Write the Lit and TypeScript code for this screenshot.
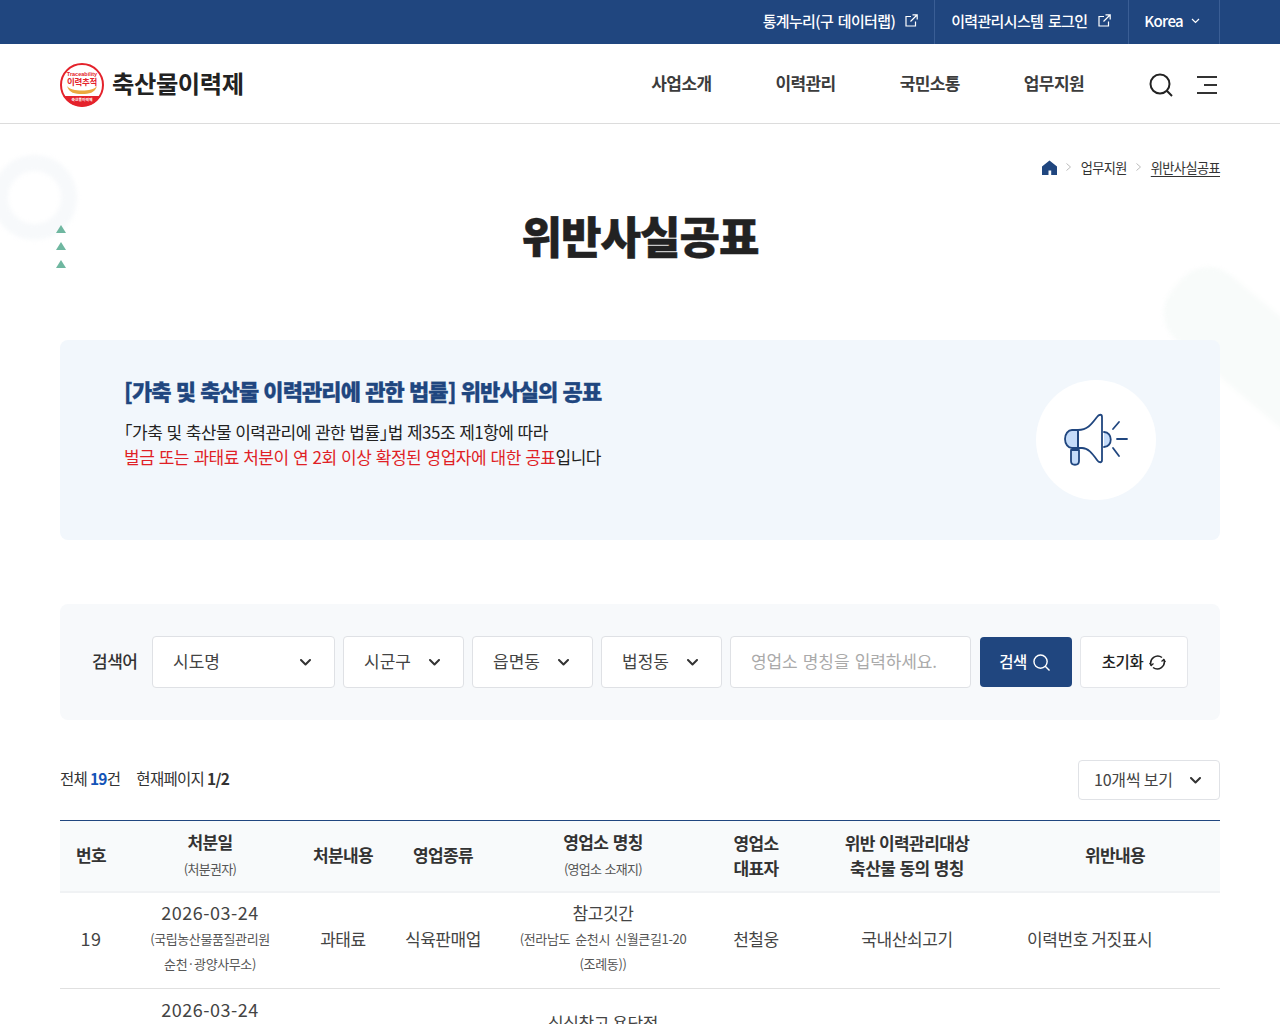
import { LitElement, html, css, svg } from "lit";
import { customElement } from "lit/decorators.js";

const chevron = svg`<path d="M1 1l4.500 4.500L10 1" fill="none" stroke="currentColor" stroke-width="2" stroke-linecap="round" stroke-linejoin="round"/>`;
const ext = html`<svg class="ext" width="13" height="13" viewBox="0 0 13 13" fill="none" stroke="#fff" stroke-width="1.200"><path d="M6 2.500H1v9.500h9.500V7.500"/><path d="M7.500 .8h4.700v4.700M12 1L5.500 7.500"/></svg>`;

@customElement("app-root")
export class AppRoot extends LitElement {
  static styles = css`
    :host { display: block; position: relative; overflow: hidden; height: 1024px; background: #fff; color: #333;
      font-family: "Noto Sans CJK KR", "Noto Sans", sans-serif; letter-spacing: -0.5px; }
    .wrap { width: 1160px; margin: 0 auto; position: relative; }
    .top { height: 44px; background: #20467f; color: #fff; }
    .top .wrap { display: flex; justify-content: flex-end; height: 44px; }
    .top a { box-sizing: border-box; display: flex; align-items: center; gap: 10px; padding: 0 16px 3px; border-left: 1px solid #3a5e95; font-size: 15px; font-weight: 500; letter-spacing: -0.65px; word-spacing: 2px; }
    .top a:first-child { border-left: 0; }
    .top a:nth-child(2) { padding-right: 17px; gap: 11px; }
    .top a:last-child { border-right: 1px solid #3a5e95; padding-left: 15px; padding-right: 19px; gap: 8px; }
    .head { height: 79px; border-bottom: 1px solid #dcdcdc; }
    .head .wrap { display: flex; align-items: center; height: 79px; }
    .brand { display: flex; align-items: center; gap: 8px; font-size: 24.3px; font-weight: 700; color: #222; letter-spacing: -0.4px; }
    .brand svg { margin-top: 2px; }
    .brand span { padding-bottom: 2px; }
    .nav { margin-left: auto; display: flex; gap: 64px; padding-bottom: 3px; font-size: 17px; font-weight: 700; color: #3c3c3c; letter-spacing: -0.6px; margin-right: 65px; }
    .tools { display: flex; align-items: center; gap: 24px; margin-right: 3px; padding-top: 2px; }
    .decor { position: absolute; pointer-events: none; }
    .ring { left: -8px; top: 155px; width: 85px; height: 85px; box-sizing: border-box; border: 16px solid #f7f9fb; border-radius: 50%; filter: blur(2px); }
    .bar { left: 1146px; top: 326px; width: 260px; height: 85px; background: #f8fbfa; border-radius: 36px; transform: rotate(40deg); filter: blur(2px); }
    .tri { left: 56px; width: 0; height: 0; border-left: 5px solid transparent; border-right: 5px solid transparent; border-bottom: 8px solid #6fb7a0; }
    .crumb { display: flex; justify-content: flex-end; align-items: center; gap: 9.5px; height: 20px; padding-top: 33px; font-size: 13.2px; color: #333; letter-spacing: -0.6px; }
    .crumb .cur { text-decoration: underline; text-underline-offset: 3px; }
    .crumb svg { display: block; }
    h1 { margin: 0 0 81px; height: 60px; padding-top: 22px; text-align: center; line-height: 72px; font-size: 44px; font-weight: 900; color: #222; letter-spacing: -1px; -webkit-text-stroke: 0.5px #222; }
    .notice { position: relative; height: 200px; box-sizing: border-box; padding: 34px 64px; background: #f2f7fc; border-radius: 8px; display: flex; justify-content: space-between; }
    .notice h2 { margin: 0 0 13px 0; font-size: 22px; line-height: 32px; font-weight: 900; color: #20467f; letter-spacing: -0.9px; word-spacing: 1px; -webkit-text-stroke: 0.3px #20467f; }
    .notice p { margin: 0; font-size: 17px; line-height: 25px; color: #222; letter-spacing: -0.5px; word-spacing: 0.8px; }
    .notice em { font-style: normal; color: #e01f26; word-spacing: 1.1px; }
    .circle { width: 120px; height: 120px; margin: 6px 0 0 0; border-radius: 50%; background: #fff; display: flex; align-items: center; justify-content: center; }
    .circle svg { margin-right: 2px; }
    .search { position: relative; margin-top: 64px; height: 116px; box-sizing: border-box; padding: 32px; background: #f7f9fb; border-radius: 8px; display: flex; gap: 8px; align-items: center; }
    .search label { width: 52px; padding-bottom: 3px; font-size: 17px; font-weight: 500; color: #333; letter-spacing: -0.5px; }
    .sel { box-sizing: border-box; height: 52px; display: flex; align-items: center; justify-content: space-between; padding: 0 23px 3px 20px; background: #fff; border: 1px solid #dfe1e5; border-radius: 4px; font-size: 17px; color: #444; letter-spacing: 0; }
    .sel svg { color: #333; margin-top: 3px; }
    .s1 { width: 183px; } .s2 { width: 121px; }
    .input { width: 241px; color: #aaa; justify-content: flex-start; padding-left: 20px; letter-spacing: -0.1px; word-spacing: 1.5px; }
    .btn { box-sizing: border-box; height: 50px; display: flex; align-items: center; justify-content: center; gap: 6px; padding-bottom: 2px; border-radius: 4px; font-size: 15.5px; font-weight: 500; letter-spacing: -0.4px; }
    .btn svg { margin-top: 2px; }
    .go { width: 92px; margin-left: 1px; padding-right: 3px; background: #20467f; color: #fff; }
    .reset { width: 108px; height: 52px; background: #fff; border: 1px solid #e4e6ea; color: #222; }
    .info { position: relative; margin-top: 40px; display: flex; justify-content: space-between; align-items: center; font-size: 15.5px; color: #333; letter-spacing: -0.7px; }
    .info .txt { padding-bottom: 5px; }
    .info b { font-weight: 700; } .info .n { color: #1454b8; } .info .sp { margin-left: 16px; }
    .per { box-sizing: border-box; width: 142px; height: 40px; padding: 0 18px 2px 15px; font-size: 16px; letter-spacing: -0.2px; border-color: #e0e2e6; }
    table { position: relative; margin-top: 20px; width: 1160px; border-collapse: collapse; table-layout: fixed; border-top: 1px solid #20467f; }
    th { box-sizing: border-box; height: 71px; padding: 0 0 2px; background: #f8fafb; border-bottom: 2px solid #f0f2f4; font-size: 17px; line-height: 25px; font-weight: 700; color: #333; letter-spacing: -0.6px; word-spacing: 1px; }
    th small { display: block; font-size: 13px; font-weight: 400; color: #555; letter-spacing: -0.7px; margin-top: 2px; }
    td { box-sizing: border-box; height: 97px; padding: 0 0 4px; text-align: center; border-bottom: 1px solid #e0e0e0; font-size: 17px; line-height: 25px; color: #444; letter-spacing: -0.4px; }
    td small { display: block; margin-top: 1px; font-size: 13px; color: #555; letter-spacing: -0.4px; word-spacing: 1.5px; }
    td small.addr { letter-spacing: -0.35px; word-spacing: 2.5px; }
    td.l { text-align: left; padding-left: 17px; }
    .date, .num { font-size: 18px; letter-spacing: 0.5px; }
  `;

  private row(n: string, date: string, org: unknown, kind: string, type: string, name: string, addr: unknown, rep: string, item: string, text: string) {
    return html`<tr>
      <td class="num">${n}</td><td><span class="date">${date}</span><small>${org}</small></td><td>${kind}</td><td>${type}</td>
      <td>${name}<small class="addr">${addr}</small></td><td>${rep}</td><td>${item}</td><td class="l">${text}</td>
    </tr>`;
  }

  render() {
    const chev = html`<svg width="11" height="7" viewBox="0 0 11 7">${chevron}</svg>`;
    return html`
      <div class="decor ring"></div>
      <div class="decor bar"></div>
      <div class="decor tri" style="top:225px"></div>
      <div class="decor tri" style="top:242px"></div>
      <div class="decor tri" style="top:260px"></div>

      <div class="top"><div class="wrap">
        <a>통계누리(구 데이터랩) ${ext}</a>
        <a>이력관리시스템 로그인 ${ext}</a>
        <a>Korea <svg width="9" height="6" viewBox="0 0 9 6" fill="none" stroke="#fff" stroke-width="1.200"><path d="M1 1l3.500 3.500L8 1"/></svg></a>
      </div></div>

      <div class="head"><div class="wrap">
        <div class="brand">
          <svg width="44" height="44" viewBox="0 0 44 44">
            <circle cx="22" cy="22" r="21" fill="#fff" stroke="#e4222b" stroke-width="2"/>
            <path d="M3.800 33h36.400A21 21 0 0 1 3.800 33z" fill="#e4222b"/>
            <text x="22" y="12.500" text-anchor="middle" font-size="5.500" font-weight="700" fill="#e4222b" letter-spacing="0" font-family="Liberation Sans, sans-serif">Traceability</text>
            <text x="22" y="21.500" text-anchor="middle" font-size="8.500" font-weight="700" fill="#e4222b" letter-spacing="-.3">이력추적</text>
            <path d="M7 23c2 7 8 8 15 8s13-1 15-8c-3 3.500-8 4.500-15 4.500S10 26.500 7 23z" fill="#eba93f"/>
            <text x="22" y="38.200" text-anchor="middle" font-size="3.800" fill="#fff" letter-spacing="0">축산물이력제</text>
          </svg>
          <span>축산물이력제</span>
        </div>
        <div class="nav"><span>사업소개</span><span>이력관리</span><span>국민소통</span><span>업무지원</span></div>
        <div class="tools">
          <svg width="24" height="24" viewBox="0 0 24 24" fill="none" stroke="#222" stroke-width="2"><circle cx="11" cy="11" r="9.500"/><path d="M17.800 17.800L23 23"/></svg>
          <svg width="20" height="18" viewBox="0 0 20 18" stroke="#333" stroke-width="2"><path d="M0 1h20M7 9h13M0 17h20"/></svg>
        </div>
      </div></div>

      <div class="wrap">
        <div class="crumb">
          <svg width="15" height="15" viewBox="0 0 15 15"><path d="M7.500 .5L15 6.500V15H9.200v-4.500H6.500V15H0V6.500z" fill="#20467f"/></svg>
          <svg width="5" height="8" viewBox="0 0 5 8" fill="none" stroke="#bbb"><path d="M.5.5L4.500 4 .5 7.500"/></svg>
          <span>업무지원</span>
          <svg width="5" height="8" viewBox="0 0 5 8" fill="none" stroke="#bbb"><path d="M.5.5L4.500 4 .5 7.500"/></svg>
          <span class="cur">위반사실공표</span>
        </div>
        <h1>위반사실공표</h1>

        <div class="notice">
          <div>
            <h2>[가축 및 축산물 이력관리에 관한 법률] 위반사실의 공표</h2>
            <p>｢가축 및 축산물 이력관리에 관한 법률｣법 제35조 제1항에 따라</p>
            <p><em>벌금 또는 과태료 처분이 연 2회 이상 확정된 영업자에 대한 공표</em>입니다</p>
          </div>
          <div class="circle">
            <svg width="70" height="60" viewBox="0 0 70 60" fill="none" stroke="#20467f" stroke-width="1.800" stroke-linecap="round" stroke-linejoin="round">
              <path d="M19 20h-7a7 9 0 0 0 0 18h7z" fill="#c5dcfa"/>
              <path d="M18 20c9 0 13-5 19-13 2-3 5-3 5 0v43c0 3-3 3-5 0-5-7-9-12-15-12h-4z" fill="#fff"/>
              <path d="M18 22v16"/>
              <path d="M11 40v11c0 5 8 5 8 0V40z" fill="#c5dcfa"/>
              <path d="M44 22c9 0 9 15 0 15" fill="#c5dcfa"/>
              <path d="M53 19l6-7M57 29h10M53 38l6 8"/>
            </svg>
          </div>
        </div>

        <div class="search">
          <label>검색어</label>
          <div class="sel s1">시도명 ${chev}</div>
          <div class="sel s2">시군구 ${chev}</div>
          <div class="sel s2">읍면동 ${chev}</div>
          <div class="sel s2">법정동 ${chev}</div>
          <div class="sel input">영업소 명칭을 입력하세요.</div>
          <div class="btn go">검색 <svg width="17" height="17" viewBox="0 0 18 18" fill="none" stroke="#fff" stroke-width="1.500"><circle cx="8" cy="8" r="7"/><path d="M13 13l4.500 4.500"/></svg></div>
          <div class="btn reset">초기화 <svg width="17" height="17" viewBox="0 0 17 17" fill="none" stroke="#222" stroke-width="1.500"><path d="M13 3.500A7 7 0 0 0 2.200 11.500"/><path d="M4 13.500A7 7 0 0 0 14.800 5.500"/><path d="M.5 9l1.700 2.500L4.500 9.500M16.500 8l-1.700-2.500L12.500 7.500" stroke-width="1.200"/></svg></div>
        </div>

        <div class="info">
          <div class="txt">전체 <b class="n">19</b>건<span class="sp">현재페이지</span> <b>1/2</b></div>
          <div class="sel per">10개씩 보기 ${chev}</div>
        </div>

        <table>
          <colgroup><col style="width:62px"><col style="width:176px"><col style="width:90px"><col style="width:110px"><col style="width:210px"><col style="width:96px"><col style="width:206px"><col style="width:210px"></colgroup>
          <thead><tr>
            <th>번호</th><th>처분일<small>(처분권자)</small></th><th>처분내용</th><th>영업종류</th>
            <th>영업소 명칭<small>(영업소 소재지)</small></th><th>영업소<br>대표자</th><th>위반 이력관리대상<br>축산물 동의 명칭</th><th>위반내용</th>
          </tr></thead>
          <tbody>
            ${this.row("19", "2026-03-24", html`(국립농산물품질관리원<br>순천·광양사무소)`, "과태료", "식육판매업", "참고깃간", html`(전라남도 순천시 신월큰길1-20<br>(조례동))`, "천철웅", "국내산쇠고기", "이력번호 거짓표시")}
            ${this.row("18", "2026-03-24", html`(국립농산물품질관리원<br>순천·광양사무소)`, "과태료", "식육판매업", "심심참고 용담점", html`(전라남도 순천시 용당동)`, "김철수", "국내산쇠고기", "이력번호 거짓표시")}
          </tbody>
        </table>
      </div>
    `;
  }
}
